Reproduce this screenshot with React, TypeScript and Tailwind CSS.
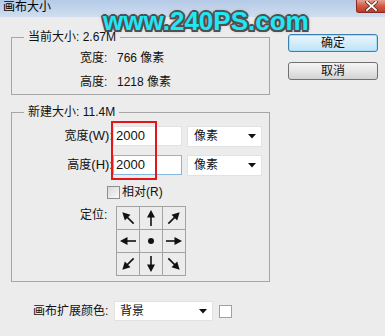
import React from "react";

function Arrow({ angle }: { angle: number }) {
  return (
    <svg width="22" height="22" viewBox="0 0 22 22">
      <g transform={`rotate(${angle} 11 11)`}>
        <line x1="11" y1="19" x2="11" y2="8" stroke="#111" strokeWidth="1.6" />
        <polygon points="11,3 7,10.5 15,10.5" fill="#111" />
      </g>
    </svg>
  );
}

function Tri() {
  return (
    <svg width="8" height="5" viewBox="0 0 8 5">
      <polygon points="0,0 8,0 4,4.5" fill="#111" />
    </svg>
  );
}

export default function App() {
  const cells: (number | null)[] = [-45, 0, 45, -90, null, 90, -135, 180, 135];
  return (
    <div className="relative w-[385px] h-[336px] overflow-hidden bg-[#ececec] text-[12px] text-[#111] font-['Liberation_Sans','Noto_Sans_CJK_SC',sans-serif]">
      {/* title bar */}
      <div className="h-[17px] flex items-start justify-between bg-linear-to-b from-[#b4cae6] to-[#d0def0]">
        <div className="pl-[3px] pt-[0px] leading-[15px] text-[12px] text-black">画布大小</div>
        <div className="w-[29px] h-[13px] rounded-bl-[3px] border border-[#8a2a1e] border-t-0 border-r-0 bg-linear-to-b from-[#e3a194] via-[#cf5a44] to-[#c0392b] flex items-center justify-center">
          <svg width="13" height="10" viewBox="0 0 13 10">
            <path d="M2 1 L11 9 M11 1 L2 9" stroke="#5a2a22" strokeWidth="3.4" strokeLinecap="square" />
            <path d="M2 1 L11 9 M11 1 L2 9" stroke="#ffffff" strokeWidth="1.8" strokeLinecap="square" />
          </svg>
        </div>
      </div>

      <div className="flex items-start">
        {/* left column */}
        <div className="w-[270px] pl-[11px] pt-[12px] flex flex-col">
          <fieldset className="w-[259px] border border-[#a6a6a6] pb-[0px]">
            <legend className="ml-[12px] px-[4px] leading-[17px]">当前大小: 2.67M</legend>
            <div className="pl-[68px] flex flex-col">
              <div className="h-[24px] flex items-center">
                <span className="w-[37px]">宽度:</span>
                <span>766 像素</span>
              </div>
              <div className="h-[24px] flex items-center">
                <span className="w-[37px]">高度:</span>
                <span>1218 像素</span>
              </div>
            </div>
          </fieldset>

          <fieldset className="mt-[9px] w-[259px] border border-[#a6a6a6] pb-[5px]">
            <legend className="ml-[12px] px-[4px] leading-[17px]">新建大小: 11.4M</legend>
            <div className="relative flex flex-col">
              <div className="mt-[5px] h-[20px] flex items-center">
                <span className="w-[101px] text-right">宽度<span className="text-[13px]">(W):</span></span>
                <div className="w-[69px] h-[20px] bg-white border border-[#e2e2e2] flex items-center pl-[2px] text-[13px]">2000</div>
                <div className="ml-[5px] w-[75px] h-[21px] bg-white border border-[#e2e2e2] flex items-center justify-between pl-[6px] pr-[5px]">
                  <span>像素</span>
                  <Tri />
                </div>
              </div>
              <div className="mt-[9px] h-[20px] flex items-center">
                <span className="w-[101px] text-right">高度<span className="text-[13px]">(H):</span></span>
                <div className="w-[69px] h-[20px] bg-white border border-[#84b6e0] flex items-center pl-[2px] text-[13px]">2000</div>
                <div className="ml-[5px] w-[75px] h-[21px] bg-white border border-[#e2e2e2] flex items-center justify-between pl-[6px] pr-[5px]">
                  <span>像素</span>
                  <Tri />
                </div>
              </div>
              <div className="mt-[11px] h-[13px] flex items-center pl-[95px]">
                <div className="w-[13px] h-[13px] border border-[#8e8f8f] bg-linear-to-br from-[#d8d8d8] to-[#fafafa]" />
                <span className="ml-[2px] leading-[13px]">相对(R)</span>
              </div>
              <div className="mt-[7px] flex items-start pl-[68px]">
                <span className="w-[36px] leading-[17px] pt-[1px]">定位:</span>
                <div className="grid grid-cols-[repeat(3,22px)] grid-rows-[repeat(3,22px)] gap-px bg-[#a3a3a3] border border-[#a3a3a3]">
                  {cells.map((a, i) => (
                    <div key={i} className="bg-[#ececec] flex items-center justify-center">
                      {a === null ? (
                        <div className="w-[6px] h-[6px] rounded-full bg-[#111]" />
                      ) : (
                        <Arrow angle={a} />
                      )}
                    </div>
                  ))}
                </div>
              </div>
              {/* red highlight */}
              <div className="absolute left-[99px] top-[0px] w-[46px] h-[59px] border-2 border-[#e3161c]" />
            </div>
          </fieldset>

          <div className="mt-[19px] pl-[22px] flex items-center">
            <span className="w-[81px]">画布扩展颜色:</span>
            <div className="w-[99px] h-[20px] bg-white border border-[#e2e2e2] flex items-center justify-between pl-[5px] pr-[5px]">
              <span>背景</span>
              <Tri />
            </div>
            <div className="ml-[6px] w-[13px] h-[13px] bg-white border border-[#a0a0a0]" />
          </div>
        </div>

        {/* right column */}
        <div className="ml-[18px] pt-[17px] flex flex-col gap-[10px]">
          <div className="w-[90px] h-[18px] rounded-[3px] border border-[#3c7fb1] bg-linear-to-b from-[#eaf6fd] to-[#bfe3f7] shadow-[inset_0_0_0_1px_#a9ddf7] flex items-center justify-center leading-[16px]">确定</div>
          <div className="w-[90px] h-[18px] rounded-[3px] border border-[#707070] bg-linear-to-b from-[#f4f4f4] via-[#e6e6e6] to-[#d3d3d3] flex items-center justify-center leading-[16px]">取消</div>
        </div>
      </div>

      {/* watermark */}
      <div className="absolute left-[103px] top-[6px] text-[26px] leading-[30px] font-bold text-[#22e6f5] [text-shadow:2px_0_0_#505050,-2px_0_0_#505050,0_2px_0_#505050,0_-2px_0_#505050,1.5px_1.5px_0_#505050,-1.5px_-1.5px_0_#505050,1.5px_-1.5px_0_#505050,-1.5px_1.5px_0_#505050,0_0_4px_#777]">
        www.240PS.com
      </div>
    </div>
  );
}
